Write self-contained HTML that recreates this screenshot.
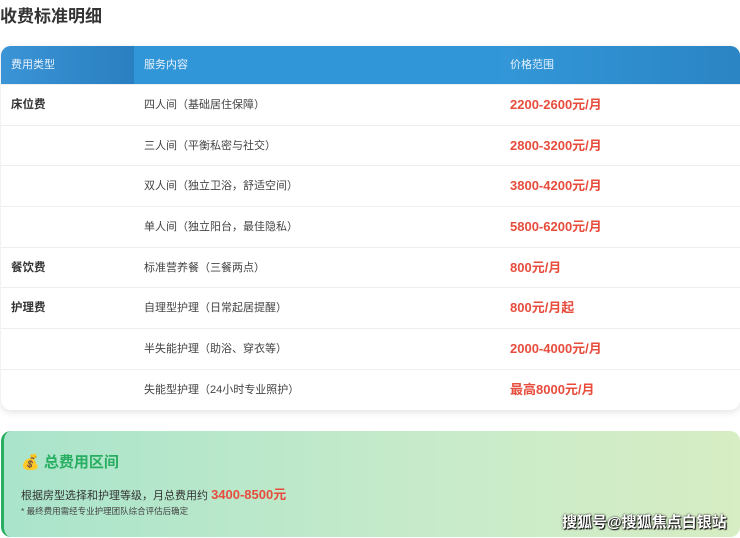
<!DOCTYPE html>
<html><head><meta charset="utf-8"><style>
body{margin:0;width:740px;height:538px;background:#fff;font-family:"Liberation Sans","Noto Sans CJK SC",sans-serif;position:relative;overflow:hidden}
h1{position:absolute;left:0;top:2px;margin:0;font-size:17px;font-weight:bold;color:#333}
.tbl{position:absolute;left:1px;top:46px;width:739px;border-radius:10px;box-shadow:0 2px 8px rgba(0,0,0,.12);overflow:hidden;background:#fff}
.hd{height:38px;display:flex;background:linear-gradient(90deg,#2f8fd4,#2a82c2);color:#e8f2fb;font-size:11px;line-height:38px}
.hd div:nth-child(1){background:linear-gradient(90deg,#3a94d6,#2a7fc0)}
.hd div:nth-child(2){background:#3196d8}
.hd div:nth-child(3){background:linear-gradient(90deg,#3297d8,#2b84c4)}
.c1{width:133px;padding-left:10px;box-sizing:border-box}
.c2{width:366px;padding-left:10px;box-sizing:border-box}
.c3{flex:1;padding-left:10px;box-sizing:border-box}
.r{height:40.7px;display:flex;line-height:40px;border-top:1px solid #eee;box-sizing:border-box;font-size:11px;color:#444}
.r .c1{font-weight:bold;color:#333;font-size:11.5px}
.r .c3{color:#e74c3c;font-weight:bold;font-size:13px}
.sum{position:absolute;left:1px;top:431px;width:739px;height:106px;border-radius:10px;border-left:3px solid #27ae60;box-sizing:border-box;background:linear-gradient(90deg,#a9e4cb,#c8ebca 60%,#d7edc3)}
.t{position:absolute;left:17px;top:20px;font-size:15px;font-weight:bold;color:#27ae60}
.p{position:absolute;left:17px;top:53px;font-size:11px;color:#333}
.p b{color:#e74c3c;font-size:13px}
.n{position:absolute;left:17px;top:74px;font-size:8.5px;color:#444}
.w{position:absolute;left:558px;top:80px;font-size:15px;font-weight:bold;color:#fff;text-shadow:0 0 2px #000,1px 1px 1px #000}
</style></head><body>
<h1>收费标准明细</h1>
<div class="tbl">
<div class="hd"><div class="c1">费用类型</div><div class="c2">服务内容</div><div class="c3">价格范围</div></div>
<div class="r"><div class="c1">床位费</div><div class="c2">四人间（基础居住保障）</div><div class="c3">2200-2600元/月</div></div>
<div class="r"><div class="c1"></div><div class="c2">三人间（平衡私密与社交）</div><div class="c3">2800-3200元/月</div></div>
<div class="r"><div class="c1"></div><div class="c2">双人间（独立卫浴，舒适空间）</div><div class="c3">3800-4200元/月</div></div>
<div class="r"><div class="c1"></div><div class="c2">单人间（独立阳台，最佳隐私）</div><div class="c3">5800-6200元/月</div></div>
<div class="r"><div class="c1">餐饮费</div><div class="c2">标准营养餐（三餐两点）</div><div class="c3">800元/月</div></div>
<div class="r"><div class="c1">护理费</div><div class="c2">自理型护理（日常起居提醒）</div><div class="c3">800元/月起</div></div>
<div class="r"><div class="c1"></div><div class="c2">半失能护理（助浴、穿衣等）</div><div class="c3">2000-4000元/月</div></div>
<div class="r"><div class="c1"></div><div class="c2">失能型护理（24小时专业照护）</div><div class="c3">最高8000元/月</div></div>
</div>
<div class="sum">
<div class="t">💰 总费用区间</div>
<div class="p">根据房型选择和护理等级，月总费用约 <b>3400-8500元</b></div>
<div class="n">* 最终费用需经专业护理团队综合评估后确定</div>
<div class="w">搜狐号@搜狐焦点白银站</div>
</div>
</body></html>
